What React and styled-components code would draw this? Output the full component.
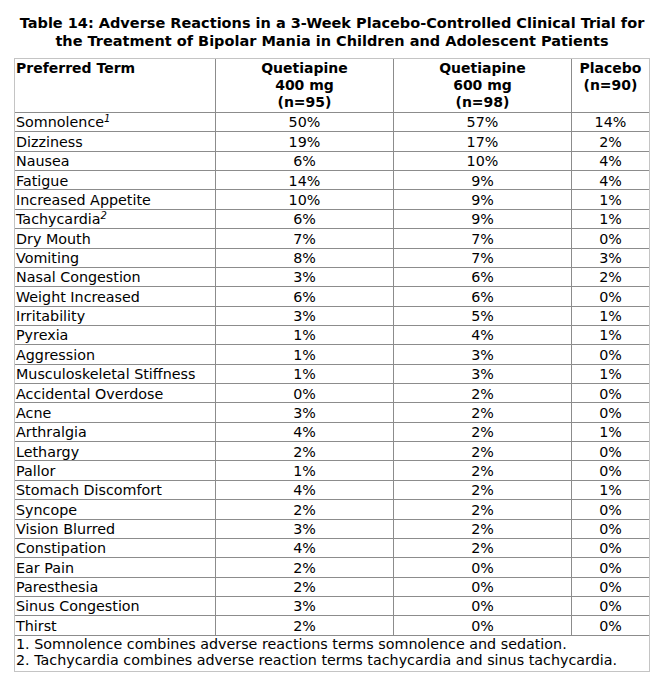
import React from "react";
import styled, { createGlobalStyle } from "styled-components";

const Global = createGlobalStyle`
  html, body { margin: 0; padding: 0; background: #fff; }
  body { font-family: "DejaVu Sans", "Noto Sans", sans-serif; color: #000; }
`;

const Page = styled.div`
  width: 664px;
  padding-top: 14px;
  display: flex;
  flex-direction: column;
  align-items: center;
`;

const Title = styled.h1`
  margin: 0 0 8px;
  font-size: 14.5px;
  line-height: 18px;
  font-weight: bold;
  text-align: center;
`;

const Table = styled.table`
  width: 636px;
  table-layout: fixed;
  border-collapse: separate;
  border-spacing: 0;
  border: 1px solid #c4c4c4;
  font-size: 14.3px;
  line-height: 16px;
`;

const Th = styled.th`
  box-sizing: border-box;
  width: ${(p) => p.$w}px;
  padding: 1.2px 2px 0.8px;
  vertical-align: top;
  font-weight: bold;
  font-size: 14px;
  line-height: 17px;
  text-align: ${(p) => (p.$left ? "left" : "center")};
  padding-left: ${(p) => (p.$left ? "1px" : "2px")};
  border-left: ${(p) => (p.$left ? "none" : "1px solid #8c8c8c")};
`;

const Td = styled.td`
  box-sizing: border-box;
  padding: 1.5px 2px 0.87px;
  padding-left: ${(p) => (p.$left ? "1px" : "2px")};
  text-align: ${(p) => (p.$left ? "left" : "center")};
  border-top: 1px solid #8c8c8c;
  border-left: ${(p) => (p.$left ? "none" : "1px solid #8c8c8c")};
  white-space: nowrap;
`;

const Note = styled.td`
  padding: 0.5px 1px 3.2px;
  border-top: 1px solid #8c8c8c;
  text-align: left;
`;

const Sup = styled.sup`
  font-size: 10px;
  font-style: italic;
  line-height: 0;
  vertical-align: 5px;
`;

const rows = [
  ["Somnolence", "1", "50%", "57%", "14%"],
  ["Dizziness", null, "19%", "17%", "2%"],
  ["Nausea", null, "6%", "10%", "4%"],
  ["Fatigue", null, "14%", "9%", "4%"],
  ["Increased Appetite", null, "10%", "9%", "1%"],
  ["Tachycardia", "2", "6%", "9%", "1%"],
  ["Dry Mouth", null, "7%", "7%", "0%"],
  ["Vomiting", null, "8%", "7%", "3%"],
  ["Nasal Congestion", null, "3%", "6%", "2%"],
  ["Weight Increased", null, "6%", "6%", "0%"],
  ["Irritability", null, "3%", "5%", "1%"],
  ["Pyrexia", null, "1%", "4%", "1%"],
  ["Aggression", null, "1%", "3%", "0%"],
  ["Musculoskeletal Stiffness", null, "1%", "3%", "1%"],
  ["Accidental Overdose", null, "0%", "2%", "0%"],
  ["Acne", null, "3%", "2%", "0%"],
  ["Arthralgia", null, "4%", "2%", "1%"],
  ["Lethargy", null, "2%", "2%", "0%"],
  ["Pallor", null, "1%", "2%", "0%"],
  ["Stomach Discomfort", null, "4%", "2%", "1%"],
  ["Syncope", null, "2%", "2%", "0%"],
  ["Vision Blurred", null, "3%", "2%", "0%"],
  ["Constipation", null, "4%", "2%", "0%"],
  ["Ear Pain", null, "2%", "0%", "0%"],
  ["Paresthesia", null, "2%", "0%", "0%"],
  ["Sinus Congestion", null, "3%", "0%", "0%"],
  ["Thirst", null, "2%", "0%", "0%"],
];

export default function App() {
  return (
    <Page>
      <Global />
      <Title>
        Table 14: Adverse Reactions in a 3-Week Placebo-Controlled Clinical Trial for
        <br />
        the Treatment of Bipolar Mania in Children and Adolescent Patients
      </Title>
      <Table>
        <thead>
          <tr>
            <Th $left $w={200}>Preferred Term</Th>
            <Th $w={178}>
              Quetiapine
              <br />
              400 mg
              <br />
              (n=95)
            </Th>
            <Th $w={178}>
              Quetiapine
              <br />
              600 mg
              <br />
              (n=98)
            </Th>
            <Th $w={78}>
              Placebo
              <br />
              (n=90)
            </Th>
          </tr>
        </thead>
        <tbody>
          {rows.map(([term, sup, a, b, c]) => (
            <tr key={term}>
              <Td $left>
                {term}
                {sup && <Sup>{sup}</Sup>}
              </Td>
              <Td>{a}</Td>
              <Td>{b}</Td>
              <Td>{c}</Td>
            </tr>
          ))}
          <tr>
            <Note colSpan={4}>
              1. Somnolence combines adverse reactions terms somnolence and sedation.
              <br />
              2. Tachycardia combines adverse reaction terms tachycardia and sinus tachycardia.
            </Note>
          </tr>
        </tbody>
      </Table>
    </Page>
  );
}
